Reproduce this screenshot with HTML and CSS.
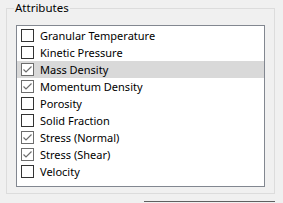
FILE: index.html
```html
<!DOCTYPE html>
<html lang="en">
<head>
  <meta charset="UTF-8">
  <title>Attributes</title>
  <link rel="stylesheet" href="styles.css">
</head>
<body>

  <!-- Attributes group -->
  <div class="group">
    <span class="group-title">Attributes</span>

    <div class="list-box">
      <div class="list-row"><span class="check"></span>Granular Temperature</div>
      <div class="list-row"><span class="check"></span>Kinetic Pressure</div>
      <div class="list-row selected"><span class="check checked"><svg viewBox="0 0 11 11"><polyline points="1.5,5.5 4,8 9.5,2.5"/></svg></span>Mass Density</div>
      <div class="list-row"><span class="check checked"><svg viewBox="0 0 11 11"><polyline points="1.5,5.5 4,8 9.5,2.5"/></svg></span>Momentum Density</div>
      <div class="list-row"><span class="check"></span>Porosity</div>
      <div class="list-row"><span class="check"></span>Solid Fraction</div>
      <div class="list-row"><span class="check checked"><svg viewBox="0 0 11 11"><polyline points="1.5,5.5 4,8 9.5,2.5"/></svg></span>Stress (Normal)</div>
      <div class="list-row"><span class="check checked"><svg viewBox="0 0 11 11"><polyline points="1.5,5.5 4,8 9.5,2.5"/></svg></span>Stress (Shear)</div>
      <div class="list-row"><span class="check"></span>Velocity</div>
    </div>
  </div>

  <!-- Top edge of the button below the group -->
  <div class="bottom-button"></div>

</body>
</html>
```

FILE: styles.css
```css
body {
  font-family: 'Segoe UI', 'Noto Sans', sans-serif;
  font-size: 11px;
  background-color: #f0f0f0;
  color: #000;
  margin: 0;
  padding: 8px 0 0 6px;
}

/* Group box */
.group {
  position: relative;
  width: 267px;
  height: 184px;
  border: 1px solid #dcdcdc;
}

.group-title {
  position: absolute;
  top: -9px;
  left: 7px;
  padding: 0 1px;
  line-height: 16px;
  font-size: 11.5px;
  background: #f0f0f0;
}

/* Checked list box */
.list-box {
  margin: 16px 0 0 9px;
  width: 247px;
  height: 159px;
  padding-top: 1px;
  border: 1px solid #828790;
  background: #fff;
}

.list-row {
  display: flex;
  align-items: center;
  height: 17px;
  padding-left: 4px;
  white-space: nowrap;
}

.list-row.selected {
  background: #d9d9d9;
}

.check {
  box-sizing: border-box;
  width: 13px;
  height: 13px;
  margin-right: 6px;
  border: 1px solid #333;
  background: #fff;
}

.check.checked {
  border-color: #6d6d6d;
}

.check svg {
  display: block;
  width: 11px;
  height: 11px;
  fill: none;
  stroke: #6d6d6d;
  stroke-width: 1.2;
}

.bottom-button {
  margin: 7px 0 0 138px;
  width: 131px;
  height: 0;
  border-top: 1px solid #606060;
}
```
